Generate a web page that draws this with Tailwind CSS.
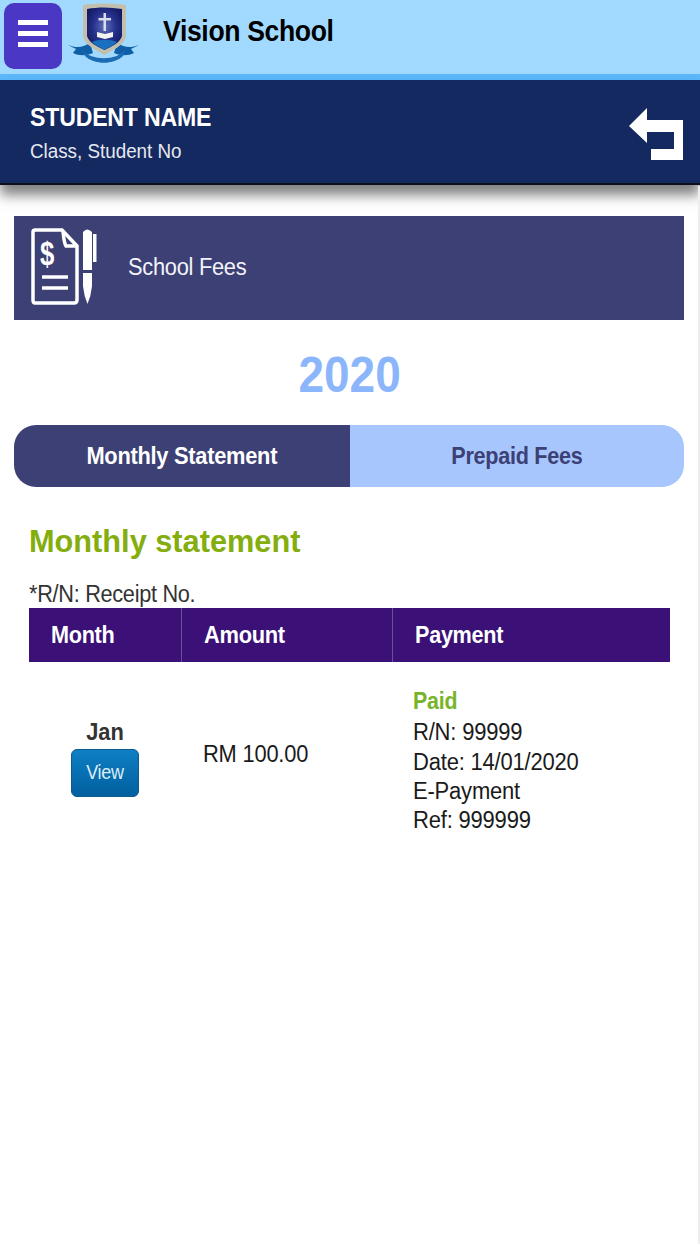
<!DOCTYPE html>
<html lang="en">
<head>
  <meta charset="UTF-8">
  <title>School Fees</title>
  <script src="https://cdn.jsdelivr.net/npm/@tailwindcss/browser@4"></script>
</head>
<body class="bg-white font-['Liberation_Sans',Arial,sans-serif]">
<div class="w-[700px] h-[1244px] overflow-hidden relative">

  <!-- top bar -->
  <header class="h-[80px] bg-[#a2daff] border-b-[6px] border-[#5cb8fb] flex items-start">
    <button type="button" class="mt-[3px] ml-[4px] w-[58px] h-[66px] rounded-[10px] bg-[#4a38c4] flex flex-col items-center justify-center gap-[6px] pb-[5px]">
      <span class="block w-[30px] h-[5px] bg-white"></span>
      <span class="block w-[30px] h-[5px] bg-white"></span>
      <span class="block w-[30px] h-[5px] bg-white"></span>
    </button>
    <svg class="ml-[6px] mt-[3px]" width="72" height="61" viewBox="0 0 72 61">
      <defs>
        <radialGradient id="crest" cx="50%" cy="45%" r="55%">
          <stop offset="0" stop-color="#5f6fb8"/>
          <stop offset="0.6" stop-color="#25308a"/>
          <stop offset="1" stop-color="#151c66"/>
        </radialGradient>
      </defs>
      <path d="M0 42 C8 45 14 45 22 40 L25 50 C18 53 11 53 5 50 L8 46 Z" fill="#0f5fa8"/>
      <path d="M71 42 C63 45 57 45 49 40 L46 50 C53 53 60 53 66 50 L63 46 Z" fill="#0f5fa8"/>
      <path d="M14 47 C24 58 48 58 57 47 L55 53 C46 62 26 62 17 53 Z" fill="#1c6cb5"/>
      <path d="M15 2 C28 0 44 0 58 2 L58 34 C55 43 45 47 36.500 52 C28 47 18 43 15 34 Z" fill="#c2bfae"/>
      <path d="M19 6 C30 4 42 4 54 6 L54 33 C52 40 43 44 36.500 47 C30 44 21 40 19 33 Z" fill="url(#crest)"/>
      <path d="M24 39 C30 36 43 36 49 39 C45 43 40 45 36.500 47 C33 45 28 43 24 39 Z" fill="#1a6fbf"/>
      <path d="M35.500 10 H38 V15 H43 V17.500 H38 V28 H35.500 V17.500 H30.500 V15 H35.500 Z" fill="#d9dcec"/>
      <path d="M29 29 L37 31 L45 29 V34 L37 36 L29 34 Z" fill="#f2f2ee"/>
    </svg>
    <h1 class="ml-[23px] mt-[13px] text-[30px] leading-[36px] font-bold text-black tracking-[-0.4px] origin-left scale-x-[0.886]">Vision School</h1>
  </header>

  <!-- student bar -->
  <section class="h-[105px] bg-[#142960] border-b-[2px] border-[#0b0f1e] shadow-[0_10px_12px_rgba(0,0,0,0.5)] flex items-center justify-between pl-[30px] pr-[16px] relative">
    <div class="pt-[2px]">
      <p class="text-[25px] leading-[30px] font-bold text-white tracking-[-0.2px] origin-left scale-x-[0.924]">STUDENT NAME</p>
      <p class="mt-[7px] text-[20px] leading-[24px] text-[#e6e8f0] origin-left scale-x-[0.94]">Class, Student No</p>
    </div>
    <svg width="55" height="53" viewBox="0 0 55 53" class="mt-[6px]">
      <path d="M0 18 L18 0 V12 H54 V52 H22 V41 H45 V24 H18 V35 Z" fill="#ffffff"/>
    </svg>
  </section>

  <main class="w-[698px] px-[14px] pt-[31px]">
    <!-- title strip -->
    <div class="h-[104px] bg-[#3d4075] flex items-center pl-[17px]">
      <svg width="66" height="80" viewBox="0 0 66 80" fill="none" stroke="#ffffff">
        <path d="M4 2 H31 L46 18 V72 Q46 75 43 75 H4 Q2 75 2 72 V4 Q2 2 4 2 Z" stroke-width="3.500"/>
        <path d="M32 3 Q33 15 35 18 L45 18" stroke-width="3.500"/>
        <text transform="translate(9 37) scale(0.78 1)" font-family="Liberation Sans" font-size="33" font-weight="700" fill="#ffffff" stroke="none">$</text>
        <path d="M11 49 H37 M11 60 H37" stroke-width="3.500"/>
        <path d="M52 4 Q56 -1 61 4 V42 H52 Z" fill="#ffffff" stroke="none"/>
        <path d="M52 45 H61 V58 Q60 68 56.500 76 Q53 68 52 58 Z" fill="#ffffff" stroke="none"/>
        <path d="M62 6 H65.500 V34 H62 Z" fill="#ffffff" stroke="none"/>
      </svg>
      <span class="ml-[31px] mb-[2px] text-[23px] text-[#f2f3fa] tracking-[-0.3px] origin-left scale-x-[0.95]">School Fees</span>
    </div>

    <div class="mt-[24px] h-[62px] flex items-center justify-center text-[50px] font-bold text-[#8cb6fb]">
      <span class="ml-[2px] scale-x-[0.92]">2020</span>
    </div>

    <!-- tabs -->
    <div class="mt-[19px] h-[62px] rounded-[22px] overflow-hidden flex text-[24px] font-bold">
      <div class="w-[336px] bg-[#3d4075] text-white flex items-center justify-center tracking-[-0.3px]">
        <span class="scale-x-[0.91]">Monthly Statement</span>
      </div>
      <div class="flex-1 bg-[#a6c6fd] text-[#3d4075] flex items-center justify-center tracking-[-0.3px]">
        <span class="scale-x-[0.9]">Prepaid Fees</span>
      </div>
    </div>

    <div class="px-[15px]">
      <h2 class="mt-[35px] text-[32px] leading-[38px] font-bold text-[#84ad0e] origin-left scale-x-[0.96]">Monthly statement</h2>
      <p class="mt-[21px] text-[23px] leading-[27px] text-[#333333] tracking-[-0.3px] origin-left scale-x-[0.943]">*R/N: Receipt No.</p>

      <table class="w-[641px] table-fixed border-collapse">
        <thead>
          <tr class="h-[54px] bg-[#3b1178] text-white text-[23px] font-bold text-left">
            <th class="w-[152px] pl-[22px] font-bold border-r border-[#6a4f9a] tracking-[-0.3px]"><span class="block origin-left scale-x-[0.94]">Month</span></th>
            <th class="w-[211px] pl-[22px] font-bold border-r border-[#6a4f9a] tracking-[-0.3px]"><span class="block origin-left scale-x-[0.95]">Amount</span></th>
            <th class="pl-[22px] font-bold tracking-[-0.3px]"><span class="block origin-left scale-x-[0.94]">Payment</span></th>
          </tr>
        </thead>
        <tbody>
          <tr class="text-[23px] text-[#1a1a1a]">
            <td class="text-center pt-[27px] align-top">
              <div class="leading-[28px] font-bold text-[#333333] mt-[29px] text-[23px] scale-x-[0.95]">Jan</div>
              <button type="button" class="mt-[3px] w-[68px] h-[48px] pb-[2px] rounded-[6px] border border-[#0b5a92] bg-gradient-to-b from-[#0f7fc4] to-[#02609f] text-[#dcecf8] text-[20px] tracking-[-0.3px]"><span class="block scale-x-[0.9]">View</span></button>
            </td>
            <td class="pl-[22px] align-middle pt-[12px] tracking-[-0.2px]"><span class="block origin-left scale-x-[0.95]">RM 100.00</span></td>
            <td class="pl-[21px] pt-[25px] align-top leading-[29.3px] tracking-[-0.2px]">
              <div class="font-bold text-[#78b42a] mb-[2px] origin-left scale-x-[0.93]">Paid</div>
              <div class="origin-left scale-x-[0.956]">R/N: 99999</div>
              <div class="origin-left scale-x-[0.956]">Date: 14/01/2020</div>
              <div class="origin-left scale-x-[0.956]">E-Payment</div>
              <div class="origin-left scale-x-[0.956]">Ref: 999999</div>
            </td>
          </tr>
        </tbody>
      </table>
    </div>
  </main>

  <!-- thin scrollbar track on the right -->
  <div class="absolute right-0 top-[186px] bottom-0 w-[2px] bg-[#eeeeee]"></div>
</div>
</body>
</html>
